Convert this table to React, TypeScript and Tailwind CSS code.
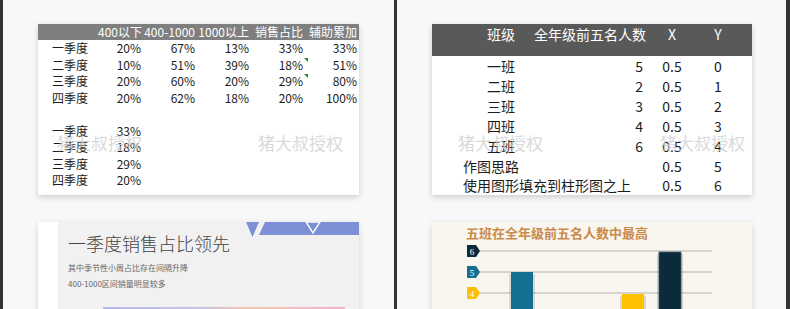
import React from "react";

const cjk = { fontFamily: '"Noto Sans CJK SC", "Noto Sans", sans-serif' };

const quarters = [
  ["一季度", "20%", "67%", "13%", "33%", "33%"],
  ["二季度", "10%", "51%", "39%", "18%", "51%"],
  ["三季度", "20%", "60%", "20%", "29%", "80%"],
  ["四季度", "20%", "62%", "18%", "20%", "100%"],
];

const shares = [
  ["一季度", "33%"],
  ["二季度", "18%"],
  ["三季度", "29%"],
  ["四季度", "20%"],
];

const classes = [
  ["一班", "5", "0.5", "0"],
  ["二班", "2", "0.5", "1"],
  ["三班", "3", "0.5", "2"],
  ["四班", "4", "0.5", "3"],
  ["五班", "6", "0.5", "4"],
];

function Watermark({ className }: { className: string }) {
  return (
    <span
      className={`pointer-events-none absolute whitespace-nowrap text-[17px] leading-none text-[#cfcfcf]/80 ${className}`}
    >
      猪大叔授权
    </span>
  );
}

function SalesTable() {
  const cols = "grid grid-cols-[60px_43px_54px_54px_54px_54px]";
  return (
    <div className="relative h-[171px] w-[321px] shrink-0 bg-white text-[12px] text-[#1c1c1c] shadow-[0_2px_6px_rgba(0,0,0,0.18)]">
      <div className={`${cols} h-4 bg-[#7f7f7f] leading-4 text-white`}>
        <span />
        <span className="whitespace-nowrap text-right">400以下</span>
        <span className="whitespace-nowrap text-right">400-1000</span>
        <span className="whitespace-nowrap text-right">1000以上</span>
        <span className="whitespace-nowrap text-right">销售占比</span>
        <span className="whitespace-nowrap text-right">辅助累加</span>
      </div>
      {quarters.map((row, i) => (
        <div key={row[0]} className={`${cols} relative leading-[16.5px]`}>
          <span className="pl-[14px]">{row[0]}</span>
          {row.slice(1).map((v, j) => (
            <span key={j} className="relative text-right">
              {v}
              {j === 3 && (i === 1 || i === 2) && (
                <span className="absolute -right-[5px] top-[1px] h-0 w-0 border-l-[4px] border-t-[4px] border-l-transparent border-t-[#1e8a2e]" />
              )}
            </span>
          ))}
        </div>
      ))}
      <div className="h-[16.5px]" />
      {shares.map((row) => (
        <div key={row[0]} className={`${cols} leading-[16.5px]`}>
          <span className="pl-[14px]">{row[0]}</span>
          <span className="text-right">{row[1]}</span>
        </div>
      ))}
    </div>
  );
}

function LeadCard() {
  return (
    <div className="relative flex h-[100px] w-[321px] shrink-0 bg-[#f1f1f1] shadow-[0_2px_6px_rgba(0,0,0,0.15)]">
      <div className="w-5 shrink-0 bg-white" />
      <div className="flex flex-col pl-[10px] pt-3">
        <h2 className="text-[18px] font-light leading-[18px] text-[#454545]">一季度销售占比领先</h2>
        <p className="mt-2 text-[8px] leading-4 text-[#666]">其中季节性小周占比存在间隔升降</p>
        <p className="text-[8px] leading-4 text-[#666]">400-1000区间销量明显较多</p>
        <div className="ml-[35px] mt-[15px] h-[3px] w-[242px] bg-[linear-gradient(90deg,#b7bbe9,#c9c2e4_40%,#f3c5ae_60%,#f1b4cf)]" />
      </div>
      <svg className="absolute right-0 top-0" width="113" height="16" viewBox="0 0 113 16">
        <polygon points="0,0 13,0 6.5,15" fill="#7d8fd6" />
        <polygon points="19,0 113,0 113,13 13,13" fill="#7d8fd6" />
        <polygon points="60,0 74,0 67,11" fill="#7d8fd6" stroke="#fff" strokeWidth="1.4" />
      </svg>
    </div>
  );
}

function ClassTable() {
  const cols = "grid grid-cols-[102px_109px_58px_34px]";
  return (
    <div className="h-[171px] w-[320px] shrink-0 bg-white text-[14px] text-[#1c1c1c] shadow-[0_2px_6px_rgba(0,0,0,0.18)]">
      <div className={`${cols} h-8 bg-[#595959] leading-5 text-white`}>
        <span className="pl-[55px]">班级</span>
        <span className="whitespace-nowrap text-right">全年级前五名人数</span>
        <span className="text-center">X</span>
        <span className="text-center">Y</span>
      </div>
      <div>
        {classes.map((r) => (
          <div key={r[0]} className={`${cols} leading-5`}>
            <span className="pl-[55px]">{r[0]}</span>
            <span className="text-right">{r[1]}</span>
            <span className="text-center">{r[2]}</span>
            <span className="text-center">{r[3]}</span>
          </div>
        ))}
        <div className={`${cols} leading-5`}>
          <span className="col-span-2 pl-[31px]">作图思路</span>
          <span className="text-center">0.5</span>
          <span className="text-center">5</span>
        </div>
        <div className={`${cols} leading-[19px]`}>
          <span className="col-span-2 whitespace-nowrap pl-[31px]">使用图形填充到柱形图之上</span>
          <span className="text-center">0.5</span>
          <span className="text-center">6</span>
        </div>
      </div>
    </div>
  );
}

function ChartCard() {
  const grid = [7, 28, 49];
  const tags = [
    { y: 7, label: "6", color: "#0d2a3b" },
    { y: 28, label: "5", color: "#176f90" },
    { y: 49, label: "4", color: "#ffc000" },
  ];
  return (
    <div className="h-[100px] w-[320px] shrink-0 bg-[#f9f6ef] shadow-[0_2px_6px_rgba(0,0,0,0.15)]">
      <h2 className="pl-[34px] pt-[3px] text-[13px] font-bold leading-4 text-[#c98a4b]">
        五班在全年级前五名人数中最高
      </h2>
      <svg className="ml-[30px] mt-[3px]" width="260" height="70" viewBox="0 0 260 70">
        {grid.map((y) => (
          <line key={y} x1="13" x2="250" y1={y} y2={y} stroke="#cdc9c2" strokeWidth="1.5" />
        ))}
        {tags.map((t) => (
          <g key={t.label}>
            <polygon
              points={`5,${t.y - 6} 14,${t.y - 6} 18,${t.y} 14,${t.y + 6} 5,${t.y + 6}`}
              fill={t.color}
            />
            <text x="10" y={t.y + 3.5} fontSize="9" fill="#fff" textAnchor="middle" fontFamily="Liberation Serif, serif">
              {t.label}
            </text>
          </g>
        ))}
        <rect x="47" y="30" width="26" height="50" fill="#000" opacity="0.12" />
        <rect x="49" y="28" width="22" height="50" fill="#146f90" />
        <rect x="158" y="52" width="26" height="30" fill="#000" opacity="0.12" />
        <rect x="160" y="50" width="22" height="30" fill="#ffc000" />
        <rect x="195" y="10" width="26" height="70" fill="#000" opacity="0.15" />
        <rect x="197" y="8" width="22" height="70" fill="#0b2a3a" stroke="#3c5566" strokeWidth="0.8" />
      </svg>
    </div>
  );
}

export default function App() {
  return (
    <div className="flex h-[309px] w-[790px] overflow-hidden bg-[#333]" style={cjk}>
      <div className="w-[3px] shrink-0" />
      <div className="relative flex w-[391px] shrink-0 flex-col gap-[27px] bg-[#f8f8f8] pl-[35px] pt-6">
        <SalesTable />
        <LeadCard />
        <Watermark className="left-[54px] top-[134px]" />
        <Watermark className="left-[255px] top-[134px]" />
      </div>
      <div className="w-[3px] shrink-0" />
      <div className="relative flex w-[389px] shrink-0 flex-col gap-[27px] bg-[#f8f8f8] pl-[35px] pt-6">
        <ClassTable />
        <ChartCard />
        <Watermark className="left-[61px] top-[134px]" />
        <Watermark className="left-[263px] top-[134px]" />
      </div>
      <div className="flex-1" />
    </div>
  );
}
